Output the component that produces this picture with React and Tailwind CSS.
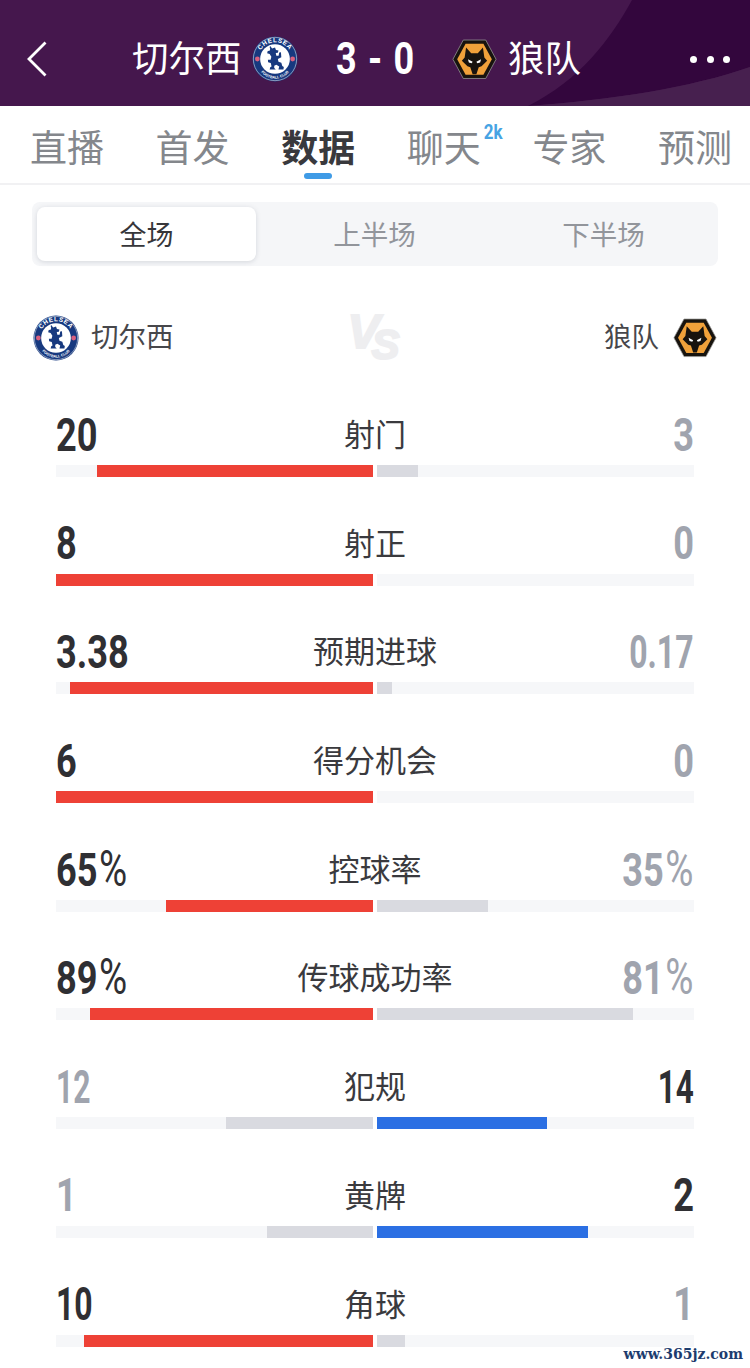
const CJK = '"Noto Sans CJK SC", "Noto Sans", sans-serif';
const stats = [
  { l: "20", r: "3", t: "射门", a: 276, b: 41, win: "l" },
  { l: "8", r: "0", t: "射正", a: 317, b: 0, win: "l" },
  { l: "3.38", r: "0.17", t: "预期进球", a: 303, b: 15, win: "l", rs: "scale-x-[0.68]" },
  { l: "6", r: "0", t: "得分机会", a: 317, b: 0, win: "l" },
  { l: "65", r: "35", t: "控球率", a: 207, b: 111, win: "l", pct: true },
  { l: "89", r: "81", t: "传球成功率", a: 283, b: 256, win: "l", pct: true },
  { l: "12", r: "14", t: "犯规", a: 147, b: 170, win: "r", ls: "scale-x-[0.64]", rs: "scale-x-[0.67]" },
  { l: "1", r: "2", t: "黄牌", a: 106, b: 211, win: "r" },
  { l: "10", r: "1", t: "角球", a: 289, b: 28, win: "l", ls: "scale-x-[0.68]" },
];

function Chelsea({ size }) {
  return (
    <svg width={size} height={size} viewBox="0 0 48 48" className="shrink-0">
      <defs>
        <path id="topArc" d="M6.500 24a17.500 17.500 0 0 1 35 0" />
        <path id="botArc" d="M5.500 26a18.500 18.500 0 0 0 37 0" />
      </defs>
      <circle cx="24" cy="24" r="23.500" fill="#17397f" />
      <circle cx="24" cy="24" r="22.600" fill="none" stroke="#d9dfe9" strokeWidth="0.6" />
      <text fontSize="6.600" fontWeight="700" fill="#fff" fontFamily="Liberation Sans, sans-serif" letterSpacing="0.6">
        <textPath href="#topArc" startOffset="50%" textAnchor="middle">CHELSEA</textPath>
      </text>
      <text fontSize="3.900" fontWeight="700" fill="#fff" fontFamily="Liberation Sans, sans-serif">
        <textPath href="#botArc" startOffset="50%" textAnchor="middle">FOOTBALL CLUB</textPath>
      </text>
      <circle cx="24" cy="24" r="15.500" fill="#fff" />
      <circle cx="5.600" cy="24" r="2.500" fill="#d9607f" />
      <circle cx="42.400" cy="24" r="2.500" fill="#d9607f" />
      <path
        fill="#17397f"
        d="M19 10.500l2 2.500 3-1 1 2.500 2.600.6-.6 2.400-2.200.2.600 2.800 2.400.2.600-3.600 1.800-.2.400 5.200-3.600 2 .6 2.800 3 1 1 3.400 1.600 1-.4 2.600h-5.200l.8-3-3-1.800-2.200 1v2.200l1.600 1.600h-6.400l.6-2.200 1.400-1-.8-3.600-2.800-.8-.2-2.400 2.800-.2.800-3-1.800-3-2.600-.8.6-2.200 2-.2.6-2-.6-2z"
      />
    </svg>
  );
}

function Wolves({ size }) {
  return (
    <svg width={size} height={size * 0.9} viewBox="0 0 48 43" className="shrink-0">
      <polygon points="12,1 36,1 47,21.500 36,42 12,42 1,21.500" fill="#17130e" stroke="#9a9a98" strokeWidth="0.8" />
      <polygon points="14.500,5 33.500,5 42.500,21.500 33.500,38 14.500,38 5.500,21.500" fill="#f0a13a" />
      <path
        fill="#17130e"
        d="M15 9l5.500 6h7L33 9l1.500 10.500L37.500 23l-6 6-3 1-2.500 7.500h-4L19.500 30l-3-1-6-6 3-3.500z"
      />
      <path fill="#fff" d="M17 21.500l5 2.700-1 1.500-3-.8zM31 21.500l-5 2.700 1 1.500 3-.8z" />
    </svg>
  );
}

function Num({ value, pct, dim, right, sx }) {
  return (
    <span
      className={`inline-block font-bold text-[47px] leading-none ${sx || "scale-x-[0.77]"} ${right ? "origin-right" : "origin-left"} ${dim ? "text-[#a0a4ae]" : "text-[#2f2f33]"}`}
      style={{ fontFamily: "Roboto, sans-serif" }}
    >
      {value}
      {pct && <span className="ml-[2px] font-normal text-[50px]">%</span>}
    </span>
  );
}

function Stat({ s }) {
  const leftWin = s.win === "l";
  return (
    <div className="h-[108.7px] flex flex-col px-[56px]">
      <div className="h-[62px] grid grid-cols-[1fr_auto_1fr] items-center">
        <div className="text-left whitespace-nowrap"><Num value={s.l} pct={s.pct} sx={s.ls} dim={!leftWin} /></div>
        <div className="mb-[3px] text-[31px] leading-none text-[#3a3a3e]">{s.t}</div>
        <div className="text-right whitespace-nowrap"><Num value={s.r} pct={s.pct} sx={s.rs} dim={leftWin} right /></div>
      </div>
      <div className="flex gap-[4px] h-[12px]">
        <div className="flex-1 bg-[#f6f7f9] flex justify-end">
          <div className={leftWin ? "h-full bg-[#ee4136]" : "h-full bg-[#d9dae0]"} style={{ width: s.a }} />
        </div>
        <div className="flex-1 bg-[#f6f7f9] flex justify-start">
          <div className={leftWin ? "h-full bg-[#d9dae0]" : "h-full bg-[#2b6fe3]"} style={{ width: s.b }} />
        </div>
      </div>
    </div>
  );
}

export default function App() {
  const tabs = ["直播", "首发", "数据", "聊天", "专家", "预测"];
  return (
    <div className="relative w-[750px] h-[1368px] overflow-hidden bg-white" style={{ fontFamily: CJK }}>
      <header className="relative h-[106px] bg-[#45174d] overflow-hidden text-white">
        <svg className="absolute inset-0" width="750" height="106" viewBox="0 0 750 106">
          <path d="M528 106C580 80 610 40 632 0H750V67C690 88 610 100 528 106Z" fill="#33063d" />
          <path d="M528 106C610 100 690 88 750 67V106Z" fill="#47204f" />
        </svg>
        <div className="relative h-full flex items-center pl-[27px] pr-[20px] pt-[12px]">
          <svg width="20" height="36" viewBox="0 0 20 36" fill="none" stroke="white" strokeWidth="2.8">
            <path d="M18.500 1.500L2 18L18.500 34.500" />
          </svg>
          <span className="ml-[85px] w-[109px] mb-[4px] text-[36.500px] leading-none whitespace-nowrap">切尔西</span>
          <span className="ml-[11px]"><Chelsea size={46} /></span>
          <span
            className="ml-[38px] mb-[1px] w-[76px] text-[45px] leading-none font-bold whitespace-nowrap origin-left scale-x-[0.8] [word-spacing:3px]"
            style={{ fontFamily: "Roboto, sans-serif" }}
          >
            3 - 0
          </span>
          <span className="ml-[40px]"><Wolves size={45} /></span>
          <span className="ml-[11px] mb-[4px] text-[36.500px] leading-none whitespace-nowrap">狼队</span>
          <div className="ml-auto flex gap-[9.500px]">
            <i className="block w-[7px] h-[7px] rounded-full bg-white" />
            <i className="block w-[7px] h-[7px] rounded-full bg-white" />
            <i className="block w-[7px] h-[7px] rounded-full bg-white" />
          </div>
        </div>
      </header>

      <nav className="h-[79px] border-b-2 border-[#f1f1f3] flex justify-between pl-[30px] pr-[18px] pt-[18px]">
        {tabs.map((t) => (
          <div key={t} className="relative">
            <span className={`text-[37px] leading-[44px] whitespace-nowrap ${t === "数据" ? "font-bold text-[#39393d]" : "text-[#84878c]"}`}>{t}</span>
            {t === "聊天" && (
              <span className="absolute -right-[23px] -top-[2px] text-[20px] leading-none font-bold text-[#47a3e3] scale-x-[0.85]" style={{ fontFamily: "Roboto, sans-serif" }}>2k</span>
            )}
            {t === "数据" && (
              <i className="absolute left-[23px] top-[49px] block w-[28px] h-[6px] rounded-full bg-[#3f9be6]" />
            )}
          </div>
        ))}
      </nav>

      <div className="mx-[32px] mt-[17px] h-[64px] rounded-[8px] bg-[#f5f6f8] flex py-[5px] pl-[5px]">
        <div className="w-[219px] h-[54px] shrink-0 rounded-[8px] bg-white shadow-[0_1px_5px_rgba(80,90,110,0.2)] flex items-center justify-center text-[27px] text-[#36363a]">全场</div>
        <div className="w-[237px] shrink-0 flex items-center justify-center text-[27.500px] text-[#92959b]">上半场</div>
        <div className="w-[221px] shrink-0 flex items-center justify-center text-[27.500px] text-[#92959b]">下半场</div>
      </div>

      <div className="h-[72px] mt-[36px] px-[33px] flex items-center">
        <Chelsea size={46} />
        <span className="ml-[12px] mb-[4px] text-[27.500px] leading-none text-[#47474b]">切尔西</span>
        <div className="relative flex-1 h-full">
          <div className="absolute left-[174px] top-0 w-[60px] h-[62px] italic font-bold text-[#eeeef0] [-webkit-text-stroke:2px_#eeeef0]" style={{ fontFamily: '"Liberation Sans", sans-serif' }}>
            <span className="absolute left-0 top-[6px] text-[48px] leading-none">V</span>
            <span className="absolute left-[24px] top-[22px] text-[42px] leading-none">S</span>
          </div>
        </div>
        <span className="mr-[14px] mb-[4px] text-[27.500px] leading-none text-[#47474b]">狼队</span>
        <Wolves size={44} />
      </div>

      <div className="mt-[29px]">
        {stats.map((s) => <Stat key={s.t} s={s} />)}
      </div>

      <div className="absolute right-[7px] bottom-[7px] text-[14px] leading-none font-bold text-[#1d3c6e] whitespace-nowrap" style={{ fontFamily: '"DejaVu Serif", serif' }}>
        www.365jz.com
      </div>
    </div>
  );
}
